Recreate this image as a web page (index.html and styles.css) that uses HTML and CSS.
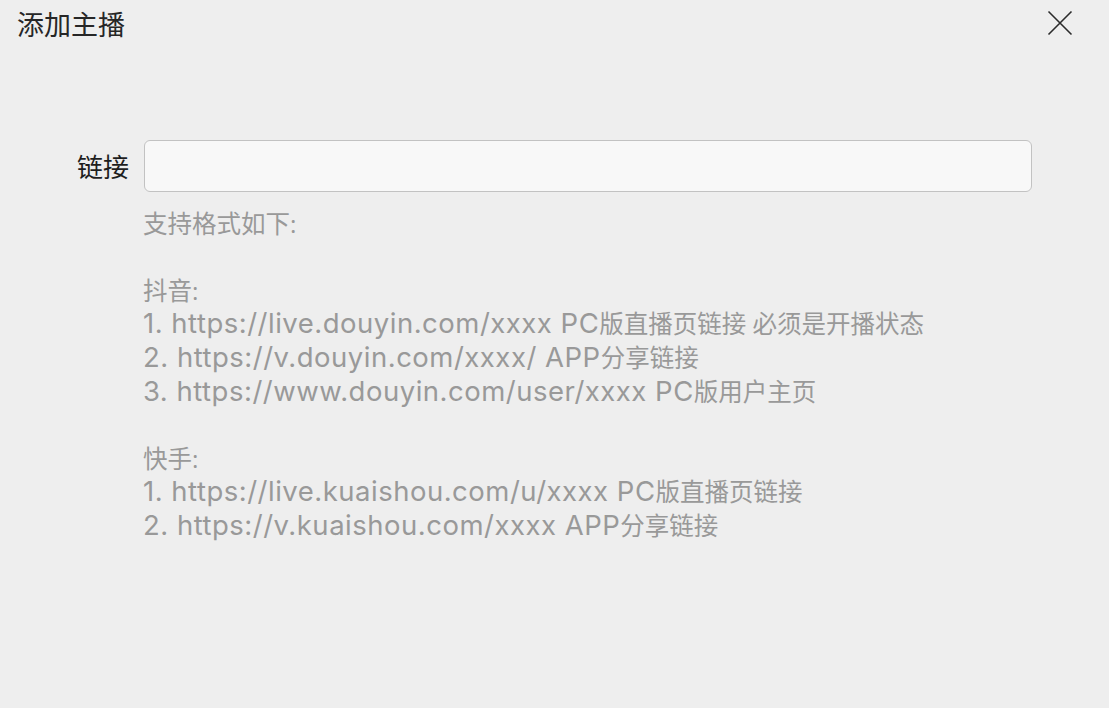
FILE: index.html
```html
<!DOCTYPE html>
<html lang="zh-CN">
<head>
    <meta charset="UTF-8">
    <meta name="viewport" content="width=device-width, initial-scale=1.0">
    <title>添加主播</title>
    <link rel="stylesheet" href="styles.css">
</head>
<body>
    <div class="dialog">
        <!-- Title bar -->
        <div class="dialog-header">
            <h2 class="dialog-title">添加主播</h2>
            <button type="button" class="close-btn" aria-label="关闭">
                <svg width="26" height="26" viewBox="0 0 26 26">
                    <path d="M1.5 1.5 L24.5 24.5 M24.5 1.5 L1.5 24.5" stroke="#2b2b2b" stroke-width="1.6" fill="none"/>
                </svg>
            </button>
        </div>

        <!-- Link form -->
        <div class="dialog-body">
            <div class="form-row">
                <label for="room-url" class="form-label">链接</label>
                <input type="text" id="room-url" class="form-input">
            </div>
            <div class="help-text">
                <p class="help-intro">支持格式如下:</p>
                <div class="help-group">
                    <p>抖音:</p>
                    <p><span class="lat">1. https://live.douyin.com/xxxx PC</span>版直播页链接 必须是开播状态</p>
                    <p><span class="lat">2. https://v.douyin.com/xxxx/ APP</span>分享链接</p>
                    <p><span class="lat">3. https://www.douyin.com/user/xxxx PC</span>版用户主页</p>
                </div>
                <div class="help-group">
                    <p>快手:</p>
                    <p><span class="lat">1. https://live.kuaishou.com/u/xxxx PC</span>版直播页链接</p>
                    <p><span class="lat">2. https://v.kuaishou.com/xxxx APP</span>分享链接</p>
                </div>
            </div>
        </div>
    </div>
</body>
</html>
```

FILE: styles.css
```css
body {
    margin: 0;
    background-color: #eeeeee;
    font-family: 'Open Sans', 'Noto Sans CJK SC', sans-serif;
    height: 100vh;
}
.dialog {
    display: flex;
    flex-direction: column;
}
.dialog-header {
    display: flex;
    justify-content: space-between;
    align-items: center;
    height: 46px;
    padding: 0 36px 0 17px;
}
.dialog-title {
    margin: 0;
    font-size: 27px;
    font-weight: normal;
    color: #262626;
}
.close-btn {
    background: none;
    border: none;
    padding: 0;
    width: 26px;
    height: 26px;
    cursor: pointer;
}
.dialog-body {
    padding: 94px 0 0 0;
}
.form-row {
    display: flex;
    align-items: center;
    gap: 15px;
}
.form-label {
    width: 129px;
    text-align: right;
    font-size: 26px;
    color: #1e1e1e;
}
.form-input {
    width: 888px;
    height: 52px;
    box-sizing: border-box;
    background-color: #f8f8f8;
    border: 1.5px solid #c2c2c2;
    border-radius: 6px;
    outline: none;
}
.help-text {
    padding-left: 143px;
    color: #999999;
    font-size: 24.5px;
    line-height: 33.7px;
}
.help-text p {
    margin: 0;
}
.help-text .lat {
    font-family: 'Inter', 'Open Sans', sans-serif;
    font-size: 27.5px;
    letter-spacing: 0.5px;
    line-height: 1;
}
.help-intro {
    margin-top: 15px !important;
}
.help-group {
    margin-top: 33px;
}
```
